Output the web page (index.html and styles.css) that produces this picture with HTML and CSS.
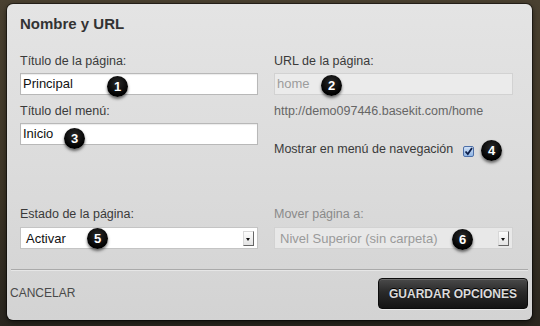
FILE: index.html
```html
<!DOCTYPE html>
<html lang="es">
<head>
<meta charset="utf-8">
<title>Nombre y URL</title>
<link rel="stylesheet" href="styles.css">
</head>
<body>
<div class="dialog">
  <h2 class="title">Nombre y URL</h2>
  <div class="form">
    <div class="field">
      <label class="label">Título de la página:</label>
      <div class="input">Principal</div>
    </div>
    <div class="field">
      <label class="label">URL de la página:</label>
      <div class="input disabled">home</div>
    </div>
    <div class="field">
      <label class="label">Título del menú:</label>
      <div class="input">Inicio</div>
    </div>
    <div class="field">
      <div class="url">http://demo097446.basekit.com/home</div>
      <div class="check-row">
        <span class="label">Mostrar en menú de navegación</span>
        <span class="checkbox"><svg width="9" height="9" viewBox="0 0 9 9"><path d="M1.5 4.5 L3.8 7 L8 1" fill="none" stroke="#0d1f4a" stroke-width="1.8"/></svg></span>
      </div>
    </div>
    <div class="field low">
      <label class="label">Estado de la página:</label>
      <div class="select"><span>Activar</span><span class="arrow"></span></div>
    </div>
    <div class="field low">
      <label class="label muted">Mover página a:</label>
      <div class="select disabled"><span>Nivel Superior (sin carpeta)</span><span class="arrow"></span></div>
    </div>
  </div>
  <div class="sep"></div>
  <div class="footer">
    <span class="cancel">CANCELAR</span>
    <span class="save">GUARDAR OPCIONES</span>
  </div>
</div>
<span class="badge b1">1</span>
<span class="badge b2">2</span>
<span class="badge b3">3</span>
<span class="badge b4">4</span>
<span class="badge b5">5</span>
<span class="badge b6">6</span>
</body>
</html>
```
FILE: styles.css
```css
html, body {
  margin: 0;
  padding: 0;
}
body {
  width: 540px;
  height: 326px;
  overflow: hidden;
  position: relative;
  background: linear-gradient(180deg, #4a4131 0%, #3d3526 60%, #2a261f 100%);
  font-family: "Liberation Sans", Arial, sans-serif;
  padding-top: 4px;
  box-sizing: border-box;
}
.dialog {
  margin-left: 7px;
  width: 525px;
  height: 316px;
  box-sizing: border-box;
  border-radius: 6px;
  background: linear-gradient(180deg, #e4e4e4 0%, #dcdcdc 50%, #d3d3d3 100%);
  box-shadow: 0 0 0 1px rgba(0,0,0,0.45), 0 2px 6px rgba(0,0,0,0.6);
  padding-top: 11px;
}
.title {
  margin: 0 0 21px 13px;
  font-size: 15px;
  line-height: 18px;
  font-weight: bold;
  color: #333;
}
.form {
  display: grid;
  grid-template-columns: 238px 239px;
  column-gap: 16px;
  row-gap: 9px;
  padding-left: 13px;
}
.field {
  display: flex;
  flex-direction: column;
}
.field.low {
  margin-top: 41px;
}
.label {
  font-size: 12.5px;
  line-height: 15px;
  color: #3a3a3a;
}
.label.muted {
  color: #8a8a8a;
}
.input {
  margin-top: 4px;
  height: 22px;
  box-sizing: border-box;
  background: #fff;
  border: 1px solid #b8b8b8;
  box-shadow: inset 0 1px 1px rgba(0,0,0,0.08);
  font-size: 13px;
  line-height: 20px;
  padding-left: 2px;
  color: #111;
}
.input.disabled {
  background: #ebebeb;
  border-color: #d2d2d2;
  color: #9c9c9c;
  box-shadow: none;
}
.url {
  font-size: 12.5px;
  line-height: 15px;
  color: #666;
}
.check-row {
  margin-top: 23px;
  display: flex;
  align-items: flex-start;
  gap: 10px;
}
.checkbox {
  margin-top: 4px;
  width: 11px;
  height: 11px;
  box-sizing: border-box;
  border: 1px solid #4d6fa8;
  border-radius: 2px;
  background: linear-gradient(180deg, #cfe0f5 0%, #8fb4e4 100%);
  display: flex;
  align-items: center;
  justify-content: center;
}
.select {
  margin-top: 5px;
  height: 22px;
  box-sizing: border-box;
  background: #fff;
  border: 1px solid #c4c4c4;
  display: flex;
  align-items: center;
  justify-content: space-between;
  padding: 0 3px 0 5px;
  font-size: 13px;
  color: #111;
}
.select.disabled {
  background: #e8e8e8;
  border-color: #d2d2d2;
  color: #9a9a9a;
}
.arrow {
  width: 11px;
  height: 15px;
  box-sizing: border-box;
  border: 1px solid #d8d8d8;
  border-right-color: #666;
  border-bottom-color: #666;
  background: linear-gradient(180deg, #fdfdfd, #e4e4e4);
  position: relative;
}
.arrow::after {
  content: "";
  position: absolute;
  left: 2px;
  top: 6px;
  border-left: 2.5px solid transparent;
  border-right: 2.5px solid transparent;
  border-top: 3px solid #111;
}
.sep {
  margin: 20px 4px 0 4px;
  border-top: 1px solid #aaaaaa;
  border-bottom: 1px solid #e6e6e6;
}
.footer {
  margin-top: 7px;
  display: flex;
  align-items: center;
  justify-content: space-between;
  padding: 0 4px 0 3px;
}
.cancel {
  font-size: 12px;
  color: #4a4a4a;
  margin-top: -1px;
}
.save {
  width: 150px;
  height: 31px;
  box-sizing: border-box;
  border-radius: 4px;
  border: 1px solid #0c0c0c;
  background: linear-gradient(180deg, #4a4a4a 0%, #2a2a2a 45%, #141414 100%);
  box-shadow: inset 0 1px 0 rgba(255,255,255,0.18), 0 1px 0 rgba(255,255,255,0.5);
  color: #dcdcdc;
  font-size: 12px;
  font-weight: bold;
  text-shadow: 0 -1px 0 #000;
  display: flex;
  align-items: center;
  justify-content: center;
}
.badge {
  position: absolute;
  width: 21px;
  height: 21px;
  border-radius: 50%;
  background: radial-gradient(circle at 50% 35%, #2a2a2a, #000 70%);
  color: #fff;
  font-size: 13px;
  font-weight: bold;
  line-height: 21px;
  text-align: center;
  box-shadow: 0 2px 3px rgba(0,0,0,0.55);
  font-family: "Liberation Sans", Arial, sans-serif;
}
.b1 { left: 107px; top: 76px; }
.b2 { left: 321px; top: 75px; }
.b3 { left: 64px; top: 128px; }
.b4 { left: 481px; top: 140px; }
.b5 { left: 87px; top: 228px; }
.b6 { left: 452px; top: 229px; }
```
